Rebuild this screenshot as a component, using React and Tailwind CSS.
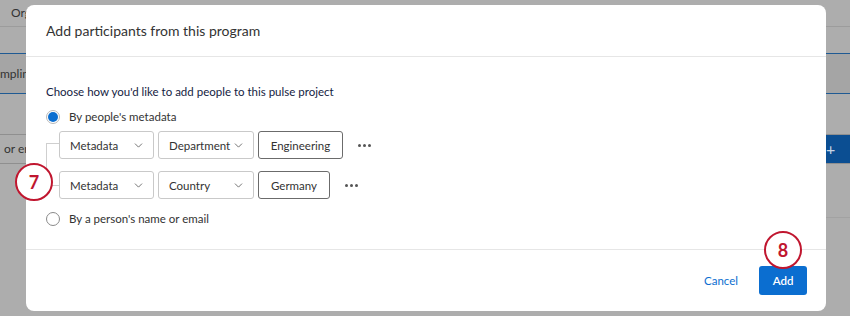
import { ChevronDown } from 'lucide-react'

const font = { fontFamily: 'Lato, "Open Sans", Arial, sans-serif' }

function Select({ label, width }) {
  return (
    <div className={`flex items-center justify-between h-[28px] rounded-[3px] border border-[#c9c9c9] bg-white pl-[10px] pr-[8px] text-[11.5px] text-[#333] ${width}`}>
      <span>{label}</span>
      <ChevronDown size={13} strokeWidth={1.5} className="text-[#555]" />
    </div>
  )
}

function ValueBox({ label, width }) {
  return (
    <div className={`flex items-center justify-center h-[28px] rounded-[3px] border border-[#6b6b6b] bg-white text-[11.5px] text-[#333] ${width}`}>
      {label}
    </div>
  )
}

function Dots() {
  return (
    <div className="flex items-center gap-[2px] pl-[11px]">
      <span className="w-[3px] h-[3px] rounded-full bg-[#555]" />
      <span className="w-[3px] h-[3px] rounded-full bg-[#555]" />
      <span className="w-[3px] h-[3px] rounded-full bg-[#555]" />
    </div>
  )
}

function Radio({ checked, label }) {
  return (
    <label className="flex items-center gap-[9px] text-[11.5px] text-[#333]">
      <span className={`w-[14px] h-[14px] rounded-full flex items-center justify-center border ${checked ? 'border-[#b9b9b9]' : 'border-[#8a8a8a]'}`}>
        {checked && <span className="w-[10px] h-[10px] rounded-full bg-[#0b6ed0]" />}
      </span>
      {label}
    </label>
  )
}

function Callout({ n }) {
  return (
    <div className="w-[38px] h-[38px] rounded-full border-[2.5px] border-[#c0162f] bg-white flex items-center justify-center text-[18px] font-bold text-[#c0162f]">
      {n}
    </div>
  )
}

export default function App() {
  return (
    <div className="relative w-[850px] h-[316px] overflow-hidden bg-[#adadad]" style={font}>
      {/* page behind the overlay */}
      <div className="flex flex-col text-[12px] text-[#333]">
        <div className="h-[27px] border-b border-[#9c9c9c] pl-[11px] flex items-center">Org</div>
        <div className="h-[27px] border-b border-[#1f5a93]" />
        <div className="h-[40px] bg-[#a5a5a5] border-b border-[#1f5a93] flex items-center">mpling</div>
        <div className="h-[41px] border-b border-[#8f8f8f]" />
        <div className="h-[29px] border-b border-[#8f8f8f] flex items-center justify-between pl-[4px]">
          <span>or em</span>
          <div className="h-full w-[30px] bg-[#0b4e92] text-[#c9d6e6] flex items-center pl-[6px] text-[16px]">+</div>
        </div>
        <div className="h-[54px] border-b border-[#a2a2a2] ml-[800px]" />
      </div>

      {/* modal */}
      <div className="absolute left-[26px] top-[5px] w-[800px] h-[306px] rounded-[8px] bg-white flex flex-col">
        <div className="h-[52px] border-b border-[#e6e6e6] px-[20px] flex items-center text-[14px] text-[#333]">
          Add participants from this program
        </div>

        <div className="flex-1 pl-[20px] pt-[28px] flex flex-col">
          <div className="text-[11.5px] leading-[14px] text-[#14223f]">Choose how you'd like to add people to this pulse project</div>
          <div className="mt-[9px]">
            <Radio checked label="By people's metadata" />
          </div>

          <div className="relative mt-[6px] pl-[13px] flex flex-col gap-[12px]">
            <div className="absolute left-0 top-[12px] w-[13px] h-[43px] border-l border-t border-b border-[#cfcfcf]" />
            <div className="flex items-center gap-[4px]">
              <Select label="Metadata" width="w-[95px]" />
              <Select label="Department" width="w-[96px]" />
              <ValueBox label="Engineering" width="w-[85px]" />
              <Dots />
            </div>
            <div className="flex items-center gap-[4px]">
              <Select label="Metadata" width="w-[95px]" />
              <Select label="Country" width="w-[96px]" />
              <ValueBox label="Germany" width="w-[72px]" />
              <Dots />
            </div>
            <div className="absolute -left-[31px] top-[32px]">
              <Callout n="7" />
            </div>
          </div>

          <div className="mt-[11px]">
            <Radio label="By a person's name or email" />
          </div>
        </div>

        <div className="relative h-[62px] border-t border-[#e6e6e6] flex items-center justify-end gap-[21px] pr-[19px]">
          <button className="text-[11.5px] text-[#0b6ed0]">Cancel</button>
          <button className="w-[48px] h-[29px] rounded-[3px] bg-[#0b6ed0] text-[11.5px] font-semibold text-white">Add</button>
          <div className="absolute right-[24px] -top-[19px]">
            <Callout n="8" />
          </div>
        </div>
      </div>
    </div>
  )
}
